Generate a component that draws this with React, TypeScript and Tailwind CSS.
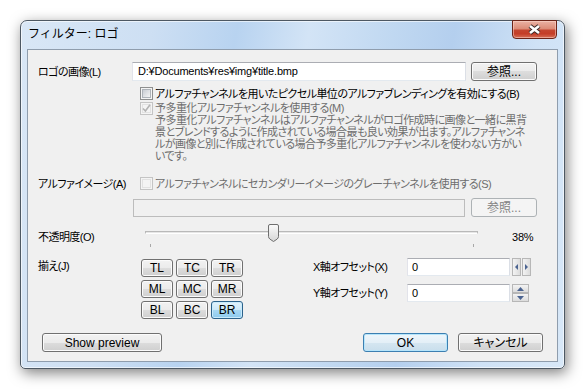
import React from 'react'

const btn =
    'flex items-center justify-center rounded-[3px] border border-[#707070] bg-[linear-gradient(to_bottom,#f2f2f2_0%,#ebebeb_50%,#dddddd_50%,#cfcfcf_100%)] shadow-[inset_0_0_0_1px_#fbfbfb] text-[12px] tracking-normal leading-none text-black'
const btnDisabled =
    'flex items-center justify-center rounded-[3px] border border-[#adb2b5] bg-[#f4f4f4] text-[12px] tracking-normal leading-none text-[#838383]'
const btnDefault =
    'flex items-center justify-center rounded-[3px] border border-[#3c7fb1] bg-[linear-gradient(to_bottom,#eef6fb_0%,#e4eff7_50%,#d5e6f1_50%,#c9deec_100%)] shadow-[inset_0_0_0_1px_#b6e5fb] text-[12px] tracking-normal leading-none text-black'
const btnPressed =
    'flex items-center justify-center rounded-[3px] border border-[#2c628b] bg-[linear-gradient(to_bottom,#e3f3fc_0%,#cbe8f8_50%,#a8d8f3_50%,#8ccaee_100%)] shadow-[inset_0_0_0_1px_#c9ebfc] text-[12px] tracking-normal leading-none text-black'
const textBox =
    'flex items-center border border-[#abadb3] border-l-[#e2e3ea] border-r-[#dbdfe6] border-b-[#e3e9ef] bg-white leading-none'

function CheckBox({ checked = false, disabled = false }: { checked?: boolean; disabled?: boolean }) {
    return (
        <span
            className={`flex h-[13px] w-[13px] shrink-0 items-center justify-center border ${
                disabled ? 'border-[#c4c4c4] bg-[#f4f4f4]' : 'border-[#8e8f8f] bg-[#f4f4f4]'
            }`}
        >
            <span
                className={`flex h-[9px] w-[9px] items-center justify-center border ${
                    disabled
                        ? 'border-[#e2e2e2] bg-[#f4f4f4]'
                        : 'border-[#aeb3b9] bg-[linear-gradient(135deg,#c9cdd3,#f4f4f4)]'
                }`}
            >
                {checked && (
                    <svg width="9" height="9" viewBox="0 0 9 9" className="overflow-visible">
                        <path d="M1 4.5 L3.4 7 L8 0.8" fill="none" stroke={disabled ? '#b3b3b3' : '#4a5f97'} strokeWidth="1.6" />
                    </svg>
                )}
            </span>
        </span>
    )
}

function SpinH() {
    return (
        <div className="ml-[2px] flex h-[18px] gap-[1px]">
            {['left', 'right'].map((d) => (
                <div
                    key={d}
                    className="flex h-[18px] w-[9px] items-center justify-center border border-[#b7b7b7] bg-[linear-gradient(to_right,#f3f3f3,#dcdcdc)]"
                >
                    <svg width="3" height="6" viewBox="0 0 3 6">
                        <path d={d === 'left' ? 'M3 0 L0 3 L3 6 Z' : 'M0 0 L3 3 L0 6 Z'} fill="#4b6390" />
                    </svg>
                </div>
            ))}
        </div>
    )
}

function SpinV() {
    return (
        <div className="ml-[2px] flex w-[17px] flex-col">
            {['up', 'down'].map((d) => (
                <div
                    key={d}
                    className="flex h-[9px] w-[17px] items-center justify-center border border-[#b7b7b7] bg-[linear-gradient(to_bottom,#f3f3f3,#dcdcdc)]"
                >
                    <svg width="7" height="4" viewBox="0 0 7 4">
                        <path d={d === 'up' ? 'M0 4 L3.5 0 L7 4 Z' : 'M0 0 L3.5 4 L7 0 Z'} fill="#4b6390" />
                    </svg>
                </div>
            ))}
        </div>
    )
}

function Slider({ value }: { value: number }) {
    // ticks at 5px and 328px, thumb centred on the value
    const left = 5 + (323 * value) / 100 - 4.5
    return (
        <div className="relative h-[24px] w-[333px]">
            <div className="absolute left-0 right-0 top-[8px] h-[3px] border border-[#b9b9b9] border-b-white bg-[#e6e6e6]" />
            <div className="absolute left-[5px] top-[21px] h-[3px] w-px bg-[#a8a8a8]" />
            <div className="absolute left-[328px] top-[21px] h-[3px] w-px bg-[#a8a8a8]" />
            <svg className="absolute top-[1px]" style={{ left }} width="11" height="18" viewBox="0 0 11 18">
                <defs>
                    <linearGradient id="thumb" x1="0" y1="0" x2="0" y2="1">
                        <stop offset="0" stopColor="#fbfbfb" />
                        <stop offset="1" stopColor="#d6d6d6" />
                    </linearGradient>
                </defs>
                <path
                    d="M2 0.5 H9 A1.5 1.5 0 0 1 10.5 2 V12.5 Q10.5 14 9 15.2 L5.5 17.5 L2 15.2 Q0.5 14 0.5 12.5 V2 A1.5 1.5 0 0 1 2 0.5 Z"
                    fill="url(#thumb)"
                    stroke="#6f6f6f"
                />
            </svg>
        </div>
    )
}

export default function App() {
    const alignments = ['TL', 'TC', 'TR', 'ML', 'MC', 'MR', 'BL', 'BC', 'BR']

    return (
        <div className="h-[392px] w-[588px] bg-white pl-[20px] pt-[20px] text-black [font-family:'Liberation_Sans','Noto_Sans_CJK_JP',sans-serif] [font-feature-settings:'palt']">
            {/* Window frame */}
            <div className="flex h-[349px] w-[545px] flex-col rounded-t-[7px] rounded-b-[5px] border border-[#4d5863] bg-[linear-gradient(100deg,#d9e7f6_0%,#cddff3_22%,#b8d3f0_36%,#d3e4f6_48%,#c0d8f1_62%,#b4cfee_72%,#cfe2f6_86%,#d8e8f8_100%)] px-[6px] pb-[6px] shadow-[inset_0_0_0_1px_rgba(255,255,255,0.6),2px_4px_14px_rgba(0,0,0,0.5)]">
                {/* Title bar */}
                <div className="flex h-[28px] items-start justify-between">
                    <span className="ml-px mt-[7px] text-[12px] leading-[12px] [font-feature-settings:normal]">
                        フィルター: ロゴ
                    </span>
                    <div className="-mt-px mr-px flex h-[19px] w-[45px] items-center justify-center rounded-b-[4px] border border-[#6b2418] bg-[linear-gradient(to_bottom,#eab2a4_0%,#dc8c78_45%,#c4452f_55%,#c43d27_75%,#d67058_100%)] shadow-[inset_0_0_0_1px_rgba(255,220,210,0.5)]">
                        <svg width="15" height="11" viewBox="0 0 15 11">
                            <path d="M3 2 L12 9 M12 2 L3 9" stroke="#3b2a28" strokeWidth="4.6" />
                            <path d="M3 2 L12 9 M12 2 L3 9" stroke="#ffffff" strokeWidth="2.6" />
                        </svg>
                    </div>
                </div>

                {/* Client area */}
                <div className="flex flex-1 flex-col whitespace-nowrap border border-[#8f9dad] bg-[#f0f0f0] pl-[10px] pt-[12px] text-[11px] leading-[12px] tracking-[-0.55px]">
                    {/* Logo image */}
                    <div className="flex h-[19px] items-center">
                        <span className="w-[94px]">ロゴの画像(L)</span>
                        <div className={`${textBox} h-[19px] w-[334px] pl-[5px] tracking-[-0.2px]`}>
                            D:¥Documents¥res¥img¥title.bmp
                        </div>
                        <div className={`${btn} ml-[5px] h-[19px] w-[66px]`}>参照...</div>
                    </div>

                    {/* Per-pixel alpha */}
                    <div className="mt-[6px] flex h-[13px] items-center pl-[102px]">
                        <CheckBox />
                        <span className="ml-[2px]">
                            アルファチャンネルを用いたピクセル単位のアルファブレンディングを有効にする(B)
                        </span>
                    </div>

                    {/* Premultiplied alpha */}
                    <div className="mt-[2px] flex items-start pl-[102px] text-[#6d6d6d]">
                        <CheckBox checked disabled />
                        <span className="ml-[2px]">
                            予多重化アルファチャンネルを使用する(M)
                            <br />
                            予多重化アルファチャンネルはアルファチャンネルがロゴ作成時に画像と一緒に黒背
                            <br />
                            景とブレンドするように作成されている場合最も良い効果が出ます。アルファチャンネ
                            <br />
                            ルが画像と別に作成されている場合予多重化アルファチャンネルを使わない方がい
                            <br />
                            いです。
                        </span>
                    </div>

                    {/* Alpha image */}
                    <div className="mt-[15px] flex h-[13px] items-center">
                        <span className="w-[102px]">アルファイメージ(A)</span>
                        <CheckBox disabled />
                        <span className="ml-[2px] text-[#6d6d6d]">
                            アルファチャンネルにセカンダリーイメージのグレーチャンネルを使用する(S)
                        </span>
                    </div>
                    <div className="ml-[95px] mt-[8px] flex h-[19px] items-center">
                        <div className="h-[18px] w-[332px] border border-[#bcbcbc] bg-[#f0f0f0]" />
                        <div className={`${btnDisabled} ml-[6px] h-[19px] w-[66px]`}>参照...</div>
                    </div>

                    {/* Opacity */}
                    <div className="mt-[6px] flex h-[24px] items-start">
                        <span className="mt-[8px] w-[107px]">不透明度(O)</span>
                        <Slider value={38} />
                        <span className="ml-[34px] mt-[8px] tracking-[-0.2px]">38%</span>
                    </div>

                    {/* Alignment & offsets */}
                    <div className="mt-[11px] flex items-start">
                        <span className="mt-[2px] w-[103px]">揃え(J)</span>
                        <div className="mt-px grid grid-cols-[repeat(3,32px)] gap-[3px]">
                            {alignments.map((a) => (
                                <div key={a} className={`${a === 'BR' ? btnPressed : btn} h-[18px]`}>
                                    {a}
                                </div>
                            ))}
                        </div>
                        <div className="ml-[70px] flex flex-col gap-[8px]">
                            <div className="flex h-[18px] items-center">
                                <span className="w-[94px]">X軸オフセット(X)</span>
                                <div className={`${textBox} h-[18px] w-[103px] pl-[4px]`}>0</div>
                                <SpinH />
                            </div>
                            <div className="flex h-[18px] items-center">
                                <span className="w-[94px]">Y軸オフセット(Y)</span>
                                <div className={`${textBox} h-[18px] w-[103px] pl-[4px]`}>0</div>
                                <SpinV />
                            </div>
                        </div>
                    </div>

                    {/* Buttons */}
                    <div className="ml-[4px] mr-[14px] mt-[14px] flex items-center justify-between">
                        <div className={`${btn} h-[19px] w-[120px]`}>Show preview</div>
                        <div className="flex gap-[10px]">
                            <div className={`${btnDefault} h-[19px] w-[85px]`}>OK</div>
                            <div className={`${btn} h-[19px] w-[85px]`}>キャンセル</div>
                        </div>
                    </div>
                </div>
            </div>
        </div>
    )
}
